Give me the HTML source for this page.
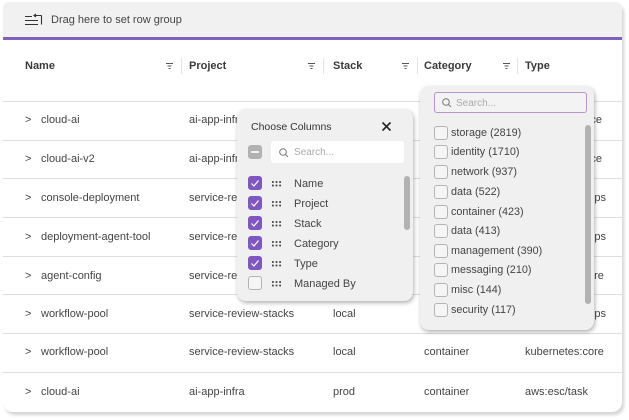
<!DOCTYPE html>
<html><head><meta charset="utf-8">
<style>
html,body{margin:0;padding:0;background:#fff}
body{width:629px;height:420px;position:relative;overflow:hidden;font-family:"Liberation Sans",sans-serif;font-size:11px;color:#444}
.a{position:absolute;white-space:nowrap;line-height:14px}
.card{position:absolute;left:3px;top:2px;width:619px;height:410px;background:#fff;border-radius:0 8px 10px 10px;box-shadow:2px 3px 3px #d4d4d4}
.top{position:absolute;left:3px;top:2px;width:619px;height:35px;background:#f1f1f1;border-radius:6px 6px 0 0}
.pl{position:absolute;left:3px;top:37px;width:619px;height:3px;background:#8060bd}
.ln{position:absolute;left:3px;width:619px;height:1px;background:#dedede}
.h{font-weight:bold;color:#3a3a3a;font-size:11px}
.sep{position:absolute;top:58px;width:1px;height:16px;background:#e2e2e2}
.pop{position:absolute;background:#f0f0f0;border-radius:9px;box-shadow:1px 2px 4px rgba(0,0,0,.3)}
.cb{position:absolute;width:12px;height:12px;border:1px solid #b4b4b4;border-radius:3px;background:#f5f5f5}
.on{background:#7e57c2;border-color:#7e57c2}
.sb{position:absolute;background:#b2b2b2;border-radius:3px;width:6px}
.l{font-size:10.8px}
svg{position:absolute;overflow:visible}
</style></head><body>
<div class="card"></div>
<div class="top"></div>
<div class="pl"></div>
<svg style="left:25px;top:14px" width="18" height="12" fill="none" stroke="#333" stroke-width="1.100"><path d="M0 2.500H7M0 6.500H13M0 10.500H13M16.500 1.500V10.500M16.500 1.500H9M11 0L9 1.500L11 3"/></svg>
<div class="a" style="left:51px;top:13px;color:#444">Drag here to set row group</div>

<div class="a h" style="left:25px;top:59px">Name</div>
<div class="a h" style="left:189px;top:59px">Project</div>
<div class="a h" style="left:333px;top:59px">Stack</div>
<div class="a h" style="left:424px;top:59px">Category</div>
<div class="a h" style="left:525px;top:59px">Type</div>
<div class="sep" style="left:181px"></div><div class="sep" style="left:323px"></div><div class="sep" style="left:417px"></div><div class="sep" style="left:517px"></div>
<svg style="left:166px;top:63px" width="7" height="6" stroke="#555" stroke-width="1"><path d="M0 .5H7M1.500 3H5.500M2.500 5.500H4.500"/></svg>
<svg style="left:308px;top:63px" width="7" height="6" stroke="#555" stroke-width="1"><path d="M0 .5H7M1.500 3H5.500M2.500 5.500H4.500"/></svg>
<svg style="left:402px;top:63px" width="7" height="6" stroke="#555" stroke-width="1"><path d="M0 .5H7M1.500 3H5.500M2.500 5.500H4.500"/></svg>
<svg style="left:503px;top:63px" width="7" height="6" stroke="#555" stroke-width="1"><path d="M0 .5H7M1.500 3H5.500M2.500 5.500H4.500"/></svg>

<div class="ln" style="top:101px"></div><div class="ln" style="top:140px"></div><div class="ln" style="top:178px"></div><div class="ln" style="top:217px"></div><div class="ln" style="top:256px"></div><div class="ln" style="top:294px"></div><div class="ln" style="top:333px"></div><div class="ln" style="top:372px"></div>

<div class="a" style="left:25px;top:113px">&gt;</div><div class="a" style="left:41px;top:113px">cloud-ai</div><div class="a" style="left:189px;top:113px">ai-app-infra</div><div class="a" style="right:27px;top:113px">aws:service</div>
<div class="a" style="left:25px;top:152px">&gt;</div><div class="a" style="left:41px;top:152px">cloud-ai-v2</div><div class="a" style="left:189px;top:152px">ai-app-infra</div><div class="a" style="right:27px;top:152px">aws:service</div>
<div class="a" style="left:25px;top:191px">&gt;</div><div class="a" style="left:41px;top:191px">console-deployment</div><div class="a" style="left:189px;top:191px">service-review-stacks</div><div class="a" style="right:23px;top:191px">aws:apps</div>
<div class="a" style="left:25px;top:230px">&gt;</div><div class="a" style="left:41px;top:230px">deployment-agent-tool</div><div class="a" style="left:189px;top:230px">service-review-stacks</div><div class="a" style="right:23px;top:230px">aws:apps</div>
<div class="a" style="left:25px;top:269px">&gt;</div><div class="a" style="left:41px;top:269px">agent-config</div><div class="a" style="left:189px;top:269px">service-review-stacks</div><div class="a" style="left:525px;top:269px">kubernetes:core</div>
<div class="a" style="left:25px;top:307px">&gt;</div><div class="a" style="left:41px;top:307px">workflow-pool</div><div class="a" style="left:189px;top:307px">service-review-stacks</div><div class="a" style="left:333px;top:307px">local</div><div class="a" style="right:23px;top:307px">aws:apps</div>
<div class="a" style="left:25px;top:345px">&gt;</div><div class="a" style="left:41px;top:345px">workflow-pool</div><div class="a" style="left:189px;top:345px">service-review-stacks</div><div class="a" style="left:333px;top:345px">local</div><div class="a" style="left:424px;top:345px">container</div><div class="a" style="left:525px;top:345px">kubernetes:core</div>
<div class="a" style="left:25px;top:385px">&gt;</div><div class="a" style="left:41px;top:385px">cloud-ai</div><div class="a" style="left:189px;top:385px">ai-app-infra</div><div class="a" style="left:333px;top:385px">prod</div><div class="a" style="left:424px;top:385px">container</div><div class="a" style="left:525px;top:385px">aws:esc/task</div>

<!-- Choose columns -->
<div class="pop" style="left:237px;top:109px;width:176px;height:192px"></div>
<div class="a" style="left:251px;top:120px;font-size:10.500px;color:#333">Choose Columns</div>
<svg style="left:382px;top:122px" width="9" height="9" stroke="#222" stroke-width="1.600" fill="none"><path d="M.5 .5L8.500 8.500M8.500 .5L.5 8.500"/></svg>
<div class="cb" style="left:248px;top:145px;background:#b2b2b2;border-color:#b2b2b2"></div>
<div class="a" style="left:251px;top:151px;width:8px;height:2px;background:#f0f0f0"></div>
<div class="a" style="left:271px;top:141px;width:133px;height:22px;background:#fff;border-radius:3px"></div>
<svg style="left:279px;top:148px" width="10" height="10" fill="none" stroke="#777" stroke-width="1"><circle cx="4" cy="4" r="3.300"/><path d="M6.500 6.500L9 9"/></svg>
<div class="a" style="left:294px;top:146px;font-size:10px;color:#aaa">Search...</div>
<div class="sb" style="left:404px;top:176px;height:54px"></div>

<div class="cb on" style="left:248px;top:176px"></div>
<svg style="left:251px;top:180px" width="8" height="7" fill="none" stroke="#fff" stroke-width="1.200"><path d="M.5 3.500L3 6L7.500 .5"/></svg>
<div class="cb on" style="left:248px;top:196px"></div>
<svg style="left:251px;top:200px" width="8" height="7" fill="none" stroke="#fff" stroke-width="1.200"><path d="M.5 3.500L3 6L7.500 .5"/></svg>
<div class="cb on" style="left:248px;top:216px"></div>
<svg style="left:251px;top:220px" width="8" height="7" fill="none" stroke="#fff" stroke-width="1.200"><path d="M.5 3.500L3 6L7.500 .5"/></svg>
<div class="cb on" style="left:248px;top:236px"></div>
<svg style="left:251px;top:240px" width="8" height="7" fill="none" stroke="#fff" stroke-width="1.200"><path d="M.5 3.500L3 6L7.500 .5"/></svg>
<div class="cb on" style="left:248px;top:256px"></div>
<svg style="left:251px;top:260px" width="8" height="7" fill="none" stroke="#fff" stroke-width="1.200"><path d="M.5 3.500L3 6L7.500 .5"/></svg>
<div class="cb" style="left:248px;top:276px"></div>

<svg style="left:272px;top:181px" width="9" height="6" stroke="#444" stroke-width="1.700" stroke-dasharray="1.800 1.800"><path d="M0 1H9M0 4.500H9"/></svg>
<svg style="left:272px;top:201px" width="9" height="6" stroke="#444" stroke-width="1.700" stroke-dasharray="1.800 1.800"><path d="M0 1H9M0 4.500H9"/></svg>
<svg style="left:272px;top:221px" width="9" height="6" stroke="#444" stroke-width="1.700" stroke-dasharray="1.800 1.800"><path d="M0 1H9M0 4.500H9"/></svg>
<svg style="left:272px;top:241px" width="9" height="6" stroke="#444" stroke-width="1.700" stroke-dasharray="1.800 1.800"><path d="M0 1H9M0 4.500H9"/></svg>
<svg style="left:272px;top:261px" width="9" height="6" stroke="#444" stroke-width="1.700" stroke-dasharray="1.800 1.800"><path d="M0 1H9M0 4.500H9"/></svg>
<svg style="left:272px;top:281px" width="9" height="6" stroke="#444" stroke-width="1.700" stroke-dasharray="1.800 1.800"><path d="M0 1H9M0 4.500H9"/></svg>

<div class="a" style="left:294px;top:177px">Name</div>
<div class="a" style="left:294px;top:197px">Project</div>
<div class="a" style="left:294px;top:217px">Stack</div>
<div class="a" style="left:294px;top:237px">Category</div>
<div class="a" style="left:294px;top:257px">Type</div>
<div class="a" style="left:294px;top:277px">Managed By</div>

<!-- Category filter -->
<div class="pop" style="left:420px;top:86px;width:174px;height:244px"></div>
<div class="a" style="left:434px;top:92px;width:151px;height:19px;background:#f3f3f3;border:1px solid #b794c9;border-radius:3px"></div>
<svg style="left:442px;top:98px" width="10" height="10" fill="none" stroke="#777" stroke-width="1"><circle cx="4" cy="4" r="3.300"/><path d="M6.500 6.500L9 9"/></svg>
<div class="a" style="left:456px;top:97px;font-size:10px;color:#aaa">Search...</div>
<div class="sb" style="left:585px;top:125px;height:179px"></div>

<div class="cb" style="left:434px;top:126px"></div><div class="a l" style="left:451px;top:126px">storage (2819)</div>
<div class="cb" style="left:434px;top:145px"></div><div class="a l" style="left:451px;top:145px">identity (1710)</div>
<div class="cb" style="left:434px;top:165px"></div><div class="a l" style="left:451px;top:165px">network (937)</div>
<div class="cb" style="left:434px;top:185px"></div><div class="a l" style="left:451px;top:185px">data (522)</div>
<div class="cb" style="left:434px;top:205px"></div><div class="a l" style="left:451px;top:205px">container (423)</div>
<div class="cb" style="left:434px;top:224px"></div><div class="a l" style="left:451px;top:224px">data (413)</div>
<div class="cb" style="left:434px;top:244px"></div><div class="a l" style="left:451px;top:244px">management (390)</div>
<div class="cb" style="left:434px;top:263px"></div><div class="a l" style="left:451px;top:263px">messaging (210)</div>
<div class="cb" style="left:434px;top:283px"></div><div class="a l" style="left:451px;top:283px">misc (144)</div>
<div class="cb" style="left:434px;top:303px"></div><div class="a l" style="left:451px;top:303px">security (117)</div>
</body></html>
